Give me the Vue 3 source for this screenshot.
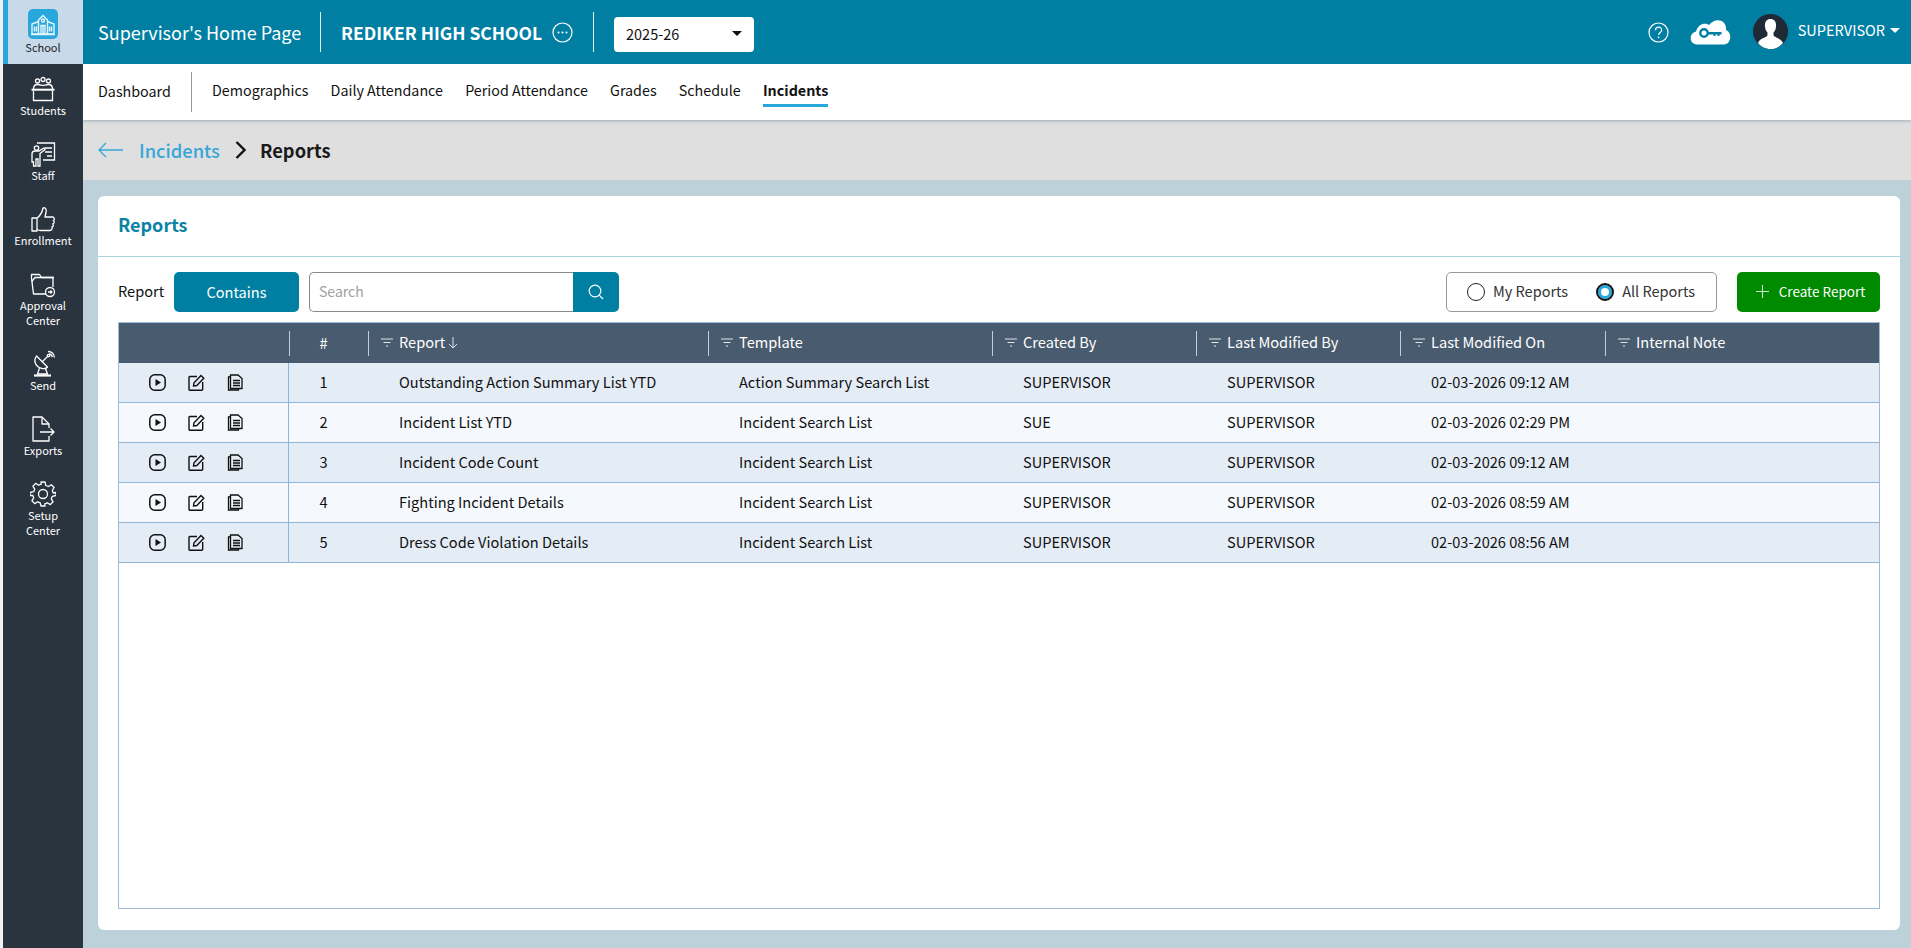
<script setup>
const nav = ['Demographics', 'Daily Attendance', 'Period Attendance', 'Grades', 'Schedule', 'Incidents']
const cols = [
  { label: 'Template' }, { label: 'Created By' }, { label: 'Last Modified By' }, { label: 'Last Modified On' }, { label: 'Internal Note' }
]
const rows = [
  ['Outstanding Action Summary List YTD', 'Action Summary Search List', 'SUPERVISOR', 'SUPERVISOR', '02-03-2026 09:12 AM'],
  ['Incident List YTD', 'Incident Search List', 'SUE', 'SUPERVISOR', '02-03-2026 02:29 PM'],
  ['Incident Code Count', 'Incident Search List', 'SUPERVISOR', 'SUPERVISOR', '02-03-2026 09:12 AM'],
  ['Fighting Incident Details', 'Incident Search List', 'SUPERVISOR', 'SUPERVISOR', '02-03-2026 08:59 AM'],
  ['Dress Code Violation Details', 'Incident Search List', 'SUPERVISOR', 'SUPERVISOR', '02-03-2026 08:56 AM']
]
</script>

<template>
  <div class="app">
    <aside class="side">
      <div class="item active">
        <span class="school-badge">
          <svg width="26" height="26" viewBox="0 0 26 26" fill="none" stroke="#e8f6fc" stroke-width="1.400">
            <path d="M8.500 9 13 4.500 17.500 9v14h-9z" /><circle cx="13" cy="9.500" r="1.500" />
            <path d="M8.500 10.500 2 13v10h6.500M17.500 10.500 24 13v10h-6.500" />
            <path d="M11 23v-8.500h4V23M13 14.500V23M4.500 15.500v5M6.500 15.500v5M19.500 15.500v5M21.500 15.500v5M1 23.500h24" />
          </svg>
        </span>
        <span class="lbl dark">School</span>
      </div>
      <div class="item">
        <svg class="ic" width="26" height="28" viewBox="0 0 26 28" fill="none" stroke="#fff" stroke-width="1.300">
          <circle cx="7.500" cy="6" r="2" /><circle cx="13" cy="4.500" r="2" /><circle cx="18.500" cy="6" r="2" />
          <path d="M3.500 14c0-3 1.500-4.500 4-4.500s4 1 5.500 1 3-1 5.500-1 4 1.500 4 4.500" /><path d="M1.500 14.700h23" stroke-width="2" /><path d="M3.500 15.500v10h19v-10" />
        </svg>
        <span class="lbl">Students</span>
      </div>
      <div class="item">
        <svg class="ic" width="26" height="28" viewBox="0 0 26 28" fill="none" stroke="#fff" stroke-width="1.300">
          <path d="M7 3h17.500v17H13" /><path d="M15 8h7M15 12h7M17 16h5" />
          <circle cx="6.500" cy="8" r="2.200" /><path d="M2 22v-8c0-2 1-3 3-3h4l5-3 1 1.500-5 4V26H8v-7H6v7H3.500v-4z" />
        </svg>
        <span class="lbl">Staff</span>
      </div>
      <div class="item">
        <svg class="ic" width="26" height="28" viewBox="0 0 26 28" fill="none" stroke="#fff" stroke-width="1.300" stroke-linejoin="round">
          <path d="M2 13h5v13H2z" /><path d="M7 13c3-2 5-5 6-10 2-1 3.500 1 3.200 3.500L15 12h7.500c2 0 2.500 3 .8 3.500 1.500 1 1 3-.5 3.300 1 1.200.5 3-.8 3.200.5 1.500-.2 3.500-2 3.500H11c-2 0-3-.5-4-1" />
        </svg>
        <span class="lbl">Enrollment</span>
      </div>
      <div class="item">
        <svg class="ic" width="26" height="28" viewBox="0 0 26 28" fill="none" stroke="#fff" stroke-width="1.300" stroke-linejoin="round">
          <path d="M16 24H3.500L1.500 8V4.500h8l2 3H23V17" /><path d="M1.800 11.500 5 7.500h19" />
          <circle cx="20" cy="22" r="4.500" /><path d="M18 22h4M20.500 20.500 22 22l-1.500 1.500" />
        </svg>
        <span class="lbl">Approval<br>Center</span>
      </div>
      <div class="item">
        <svg class="ic" width="26" height="28" viewBox="0 0 26 28" fill="none" stroke="#fff" stroke-width="1.300" stroke-linejoin="round">
          <path d="M6.500 6c-3.500 5-1 11 5.500 12.500 2 .4 4.500-.2 5.500-1.500z" /><path d="M12 12l6-6" /><circle cx="18.500" cy="5.500" r="1.200" />
          <path d="M18 1.500c3.500 0 6 2.500 6.500 6M19 4c1.800 0 3 1.300 3.300 3.200" />
          <path d="M9.500 18 7.500 24h10l-2-5.500" /><path d="M4 25.500h17" stroke-width="2.200" />
        </svg>
        <span class="lbl">Send</span>
      </div>
      <div class="item">
        <svg class="ic" width="26" height="28" viewBox="0 0 26 28" fill="none" stroke="#fff" stroke-width="1.300" stroke-linejoin="round">
          <path d="M19 13V9l-7-7H3v24h16v-5" /><path d="M12 2v7h7" /><path d="M10 17h14M20.500 13.500 24 17l-3.500 3.500" />
        </svg>
        <span class="lbl">Exports</span>
      </div>
      <div class="item">
        <svg class="ic" width="26" height="28" viewBox="0 0 26 28" fill="none" stroke="#fff" stroke-width="1.300" stroke-linejoin="round">
          <circle cx="13" cy="14" r="4.500" />
          <path d="M11 2h4l.8 3.500 2.500 1 3-1.800 2.800 2.800-1.800 3 1 2.500L26 12.500v3l-3.700.8-1 2.500 1.800 3-2.800 2.800-3-1.800-2.500 1L15 26h-4l-.8-3.200-2.500-1-3 1.800-2.800-2.800 1.800-3-1-2.500L0 15.500v-3l3.700-.8 1-2.500-1.800-3 2.800-2.800 3 1.800 2.500-1z" />
        </svg>
        <span class="lbl">Setup<br>Center</span>
      </div>
    </aside>

    <main class="main">
      <header class="top">
        <span class="page-title">Supervisor's Home Page</span>
        <span class="top-sep"></span>
        <strong class="school">REDIKER HIGH SCHOOL</strong>
        <svg class="dots" width="21" height="21" viewBox="0 0 21 21" fill="none" stroke="#fff" stroke-width="1.200">
          <circle cx="10.500" cy="10.500" r="9.500" />
          <circle cx="6.500" cy="10.500" r="1" fill="#fff" stroke="none" /><circle cx="10.500" cy="10.500" r="1" fill="#fff" stroke="none" /><circle cx="14.500" cy="10.500" r="1" fill="#fff" stroke="none" />
        </svg>
        <span class="top-sep second"></span>
        <div class="year"><span>2025-26</span><i class="caret"></i></div>
        <div class="top-right">
          <svg width="21" height="21" viewBox="0 0 21 21" fill="none" stroke="#fff" stroke-width="1.200">
            <circle cx="10.500" cy="10.500" r="9.500" /><path d="M7.500 8.200c0-4 6.200-4 6.200-.1 0 2.400-3.100 2.300-3.100 4.800" />
            <circle cx="10.600" cy="15.300" r=".9" fill="#fff" stroke="none" />
          </svg>
          <svg class="cloud" width="41" height="26" viewBox="0 0 41 26">
            <path fill="#fff" d="M7 25.500C-1.500 25 -1 14 6 12.500 8 5 15 3 19 6 25-2 37 0 36 11c6 2 6 14-2 14.500z" />
            <circle cx="14" cy="14" r="3.700" fill="none" stroke="#007fa3" stroke-width="2.400" />
            <path d="M17.500 13h14v2.500h-2v1.500h-2v-1.500h-2v1.500h-2v-1.500h-6z" fill="#007fa3" />
          </svg>
          <svg class="avatar" width="35" height="35" viewBox="0 0 35 35">
            <circle cx="17.500" cy="17.500" r="17.500" fill="#1f2a36" />
            <path fill="#fff" d="M17.500 5c-4 0-6 3-5.500 7.500.2 2.500 1 4.500 2.500 6l-.2 3.500C11 24 6.500 25 5 29c3 3.800 7.500 6 12.500 6s9.500-2.200 12.500-6c-1.500-4-6-5-9.300-7l-.2-3.500c1.500-1.500 2.300-3.500 2.500-6C23.500 8 21.500 5 17.500 5z" />
          </svg>
          <span class="user">SUPERVISOR</span>
          <i class="caret white"></i>
        </div>
      </header>

      <nav class="subnav">
        <span class="dash">Dashboard</span>
        <span class="sub-sep"></span>
        <div class="tabs">
          <span v-for="n in nav" :key="n" class="tab" :class="{ on: n === 'Incidents' }">{{ n }}</span>
        </div>
      </nav>

      <div class="crumb">
        <svg width="25" height="16" viewBox="0 0 25 16" fill="none" stroke="#35a7d8" stroke-width="1.300">
          <path d="M25 8H1M8 1 1 8l7 7" />
        </svg>
        <span class="crumb-link">Incidents</span>
        <svg width="11" height="18" viewBox="0 0 11 18" fill="none" stroke="#111" stroke-width="2.400"><path d="m1.500 1 8 8-8 8" /></svg>
        <strong class="crumb-cur">Reports</strong>
      </div>

      <div class="content">
        <section class="card">
          <h2 class="card-title">Reports</h2>
          <div class="toolbar">
            <span class="tool-lbl">Report</span>
            <button class="contains">Contains</button>
            <div class="search">
              <input placeholder="Search" />
              <span class="search-btn">
                <svg width="16" height="16" viewBox="0 0 16 16" fill="none" stroke="#fff" stroke-width="1.200">
                  <circle cx="7" cy="7" r="5.800" /><path d="m11.200 11.200 3.800 3.800" />
                </svg>
              </span>
            </div>
            <div class="radios">
              <label class="radio"><i class="dot"></i>My Reports</label>
              <label class="radio"><i class="dot sel"></i>All Reports</label>
            </div>
            <button class="create">
              <svg width="13" height="13" viewBox="0 0 13 13" stroke="#cfe8cf" stroke-width="1.100"><path d="M6.500 0v13M0 6.500h13" /></svg>
              Create Report
            </button>
          </div>

          <div class="table">
            <div class="tr head">
              <div class="th"></div>
              <div class="th sep hash">#</div>
              <div class="th sep">
                <svg class="fil" width="12" height="9" viewBox="0 0 12 9" stroke="#dfe5ea" stroke-width="1.100"><path d="M0 1h12M2.500 4.500h7M5 8h2" /></svg>
                <span>Report</span>
                <svg class="arrow" width="10" height="12" viewBox="0 0 10 12" fill="none" stroke="#dfe5ea" stroke-width="1"><path d="M5 0v11M1 7l4 4 4-4" /></svg>
              </div>
              <div v-for="c in cols" :key="c.label" class="th sep">
                <svg class="fil" width="12" height="9" viewBox="0 0 12 9" stroke="#dfe5ea" stroke-width="1.100"><path d="M0 1h12M2.500 4.500h7M5 8h2" /></svg>
                <span>{{ c.label }}</span>
              </div>
            </div>
            <div v-for="(r, i) in rows" :key="i" class="tr row" :class="{ alt: i % 2 === 1 }">
              <div class="td actions">
                <svg width="17" height="17" viewBox="0 0 17 17" fill="none" stroke="#111" stroke-width="1.500">
                  <rect x=".8" y=".8" width="15.400" height="15.400" rx="5" /><path d="M6.500 5v7l5.500-3.500z" fill="#111" stroke="none" />
                </svg>
                <svg width="17" height="17" viewBox="0 0 17 17" fill="none" stroke="#111" stroke-width="1.400">
                  <path d="M9 2.500H2a1 1 0 0 0-1 1v11.700a1 1 0 0 0 1 1h11.700a1 1 0 0 0 1-1V8" /><path d="M5.500 12 6 8.800 13 1.500l2.800 2.700-7 7.300z" />
                </svg>
                <svg width="17" height="17" viewBox="0 0 17 17" fill="none" stroke="#111" stroke-width="1.300">
                  <path d="M3.500 3H1.500v13h10v-1.500" /><path d="M3.500 1h7.500l4 3.500V14.500H3.500z" /><path d="M6 6.500h7M6 9h7M6 11.500h7" />
                </svg>
              </div>
              <div class="td hash">{{ i + 1 }}</div>
              <div v-for="(v, k) in r" :key="k" class="td">{{ v }}</div>
              <div class="td"></div>
            </div>
          </div>
        </section>
      </div>
    </main>
  </div>
</template>

<style>
html, body { margin: 0; background: #bdd1da; }
</style>

<style scoped>
* { box-sizing: border-box; }
.app {
  display: flex;
  height: 948px;
  overflow: hidden;
  padding-left: 3px;
  background: #f1f1f1;
  font-family: "Noto Sans CJK SC", "Noto Sans", sans-serif;
  font-size: 14.600px;
  color: #111;
}
.side { width: 80px; flex: none; background: #29343f; }
.item { display: flex; flex-direction: column; align-items: center; padding: 10px 0 12px; color: #fff; }
.item.active { height: 64px; padding: 9px 5px 0 0; background: #c8d9ea; border-left: 5px solid #27a7dc; margin-bottom: 1px; }
.school-badge { width: 30px; height: 30px; border-radius: 5px; background: #27a7dc; display: flex; align-items: center; justify-content: center; }
.ic { display: block; }
.lbl { font-size: 11px; line-height: 15px; text-align: center; }
.lbl.dark { color: #222; margin-top: 1px; }
.main { flex: 1; min-width: 0; display: flex; flex-direction: column; background: #bdd1da; }
.top { height: 64px; flex: none; background: #007fa3; color: #fff; display: flex; align-items: center; padding-left: 15px; }
.page-title { font-size: 18px; width: 222px; }
.top-sep { width: 1px; height: 40px; background: #e6f2f6; }
.school { margin-left: 20px; font-size: 17.500px; font-weight: 700; width: 211px; white-space: nowrap; }
.dots { flex: none; }
.top-sep.second { margin-left: 20px; }
.year { margin-left: 20px; margin-top: 5px; width: 140px; height: 35px; padding: 0 12px 2px; background: #fff; color: #111; border-radius: 4px; display: flex; align-items: center; justify-content: space-between; font-size: 14.500px; }
.caret { width: 0; height: 0; border-left: 5px solid transparent; border-right: 5px solid transparent; border-top: 5px solid #111; }
.caret.white { border-top-color: #fff; margin-left: 5px; }
.top-right { margin-left: auto; display: flex; align-items: center; padding-right: 11px; }
.cloud { margin-left: 21px; }
.avatar { margin-left: 22px; margin-top: -1px; }
.user { margin-left: 10px; font-size: 14.500px; margin-top: -6px; }
.top-right .caret.white { margin-top: -4px; }
.subnav { height: 56px; flex: none; background: #fff; display: flex; align-items: center; padding-left: 15px; box-shadow: 0 1px 3px rgba(70, 110, 130, .45); position: relative; }
.dash { width: 93px; font-size: 14.300px; margin-top: -3px; }
.sub-sep { width: 1px; height: 40px; background: #9a9a9a; }
.tabs { display: flex; gap: 22.200px; margin-left: 20px; height: 56px; font-size: 14.300px; }
.tab { line-height: 52px; height: 43px; white-space: nowrap; }
.tab.on { font-weight: 700; border-bottom: 3px solid #27a7dc; }
.crumb { height: 60px; flex: none; background: #dfdfdf; display: flex; align-items: center; padding-left: 15px; }
.crumb-link { margin-left: 16px; font-size: 18.300px; font-weight: 500; color: #35a7d8; width: 96px; margin-top: -1px; }
.crumb-cur { margin-left: 14px; font-size: 18.300px; font-weight: 700; color: #1a1a1a; margin-top: -1px; }
.content { flex: 1; min-height: 0; padding: 16px 11px 18px 15px; }
.card { height: 734px; background: #fff; border-radius: 6px; display: flex; flex-direction: column; }
.card-title { margin: 0; height: 61px; padding-left: 20px; line-height: 56px; font-size: 18px; font-weight: 700; color: #0a82a5; border-bottom: 1px solid #a9d3de; flex: none; }
.toolbar { display: flex; align-items: center; height: 40px; margin: 15px 20px 10px; flex: none; }
.tool-lbl { width: 56px; margin-top: -3px; }
.contains { width: 125px; height: 40px; border: 0; border-radius: 5px; background: #007fa3; color: #fff; font: inherit; padding-bottom: 3px; }
.search { display: flex; margin-left: 10px; width: 310px; height: 40px; }
.search input { flex: 1; min-width: 0; border: 1px solid #8a8a8a; border-right: 0; border-radius: 5px 0 0 5px; padding: 0 9px 2px; font: inherit; font-size: 14px; outline: 0; }
.search input::placeholder { color: #a0a0a0; }
.search-btn { width: 46px; background: #007fa3; border-radius: 0 5px 5px 0; display: flex; align-items: center; justify-content: center; }
.radios { margin-left: auto; width: 271px; height: 40px; border: 1px solid #9a9a9a; border-radius: 5px; display: flex; align-items: center; padding: 0 0 3px 20px; gap: 28px; }
.radio { display: flex; align-items: center; gap: 8px; color: #333; font-size: 14.500px; }
.dot { width: 18px; height: 18px; border-radius: 50%; border: 1.500px solid #222; background: #fff; margin-top: 3px; }
.dot.sel { background: #fff; border: 2px solid #111; box-shadow: inset 0 0 0 3px #27a7dc; }
.create { margin-left: 20px; width: 143px; height: 40px; padding: 0 0 2px 4px; border: 0; border-radius: 5px; background: #008a00; color: #fff; font: inherit; font-size: 13.500px; display: flex; align-items: center; justify-content: center; gap: 10px; }
.table { flex: 1; margin: 0 20px 21px; border: 1px solid #9bbbd9; min-height: 0; }
.tr { display: grid; grid-template-columns: 170px 79px 340px 284px 204px 204px 205px 1fr 0; }
.head { height: 40px; background: #495b6e; color: #fff; }
.th { display: flex; align-items: center; padding: 0 0 3px 31px; position: relative; white-space: nowrap; }
.th.sep::before { content: ""; position: absolute; left: 0; top: 8px; height: 25px; width: 1px; background: #c5ced6; }
.hash { justify-content: center; padding: 0 10px 2px 0 !important; }
.fil { position: absolute; left: 13px; top: 15px; }
.arrow { margin-left: 3px; margin-top: 2px; }
.row { height: 40px; background: #e4ecf6; border-bottom: 1px solid #8fb5d9; }
.row.alt { background: #f5f9fd; }
.td { display: flex; align-items: center; padding: 0 0 2px 31px; white-space: nowrap; }
.actions { padding: 0 0 0 30px; gap: 22px; border-right: 1px solid #8fb5d9; }
</style>
